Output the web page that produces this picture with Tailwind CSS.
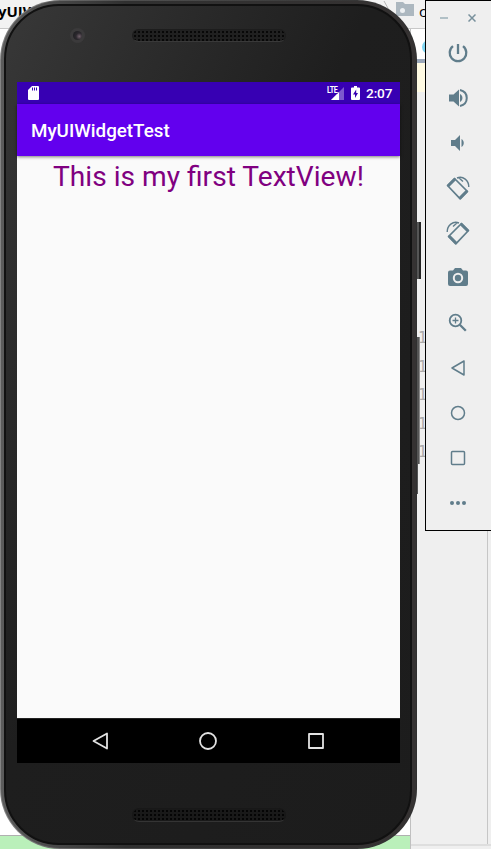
<!DOCTYPE html>
<html lang="en">
<head>
<meta charset="utf-8">
<title>Android Emulator</title>
<script src="https://cdn.jsdelivr.net/npm/@tailwindcss/browser@4"></script>
</head>
<body class="relative w-[491px] h-[849px] overflow-hidden bg-white font-['Roboto',sans-serif]">

<!-- IDE window behind the emulator -->
<div class="flex flex-col w-full h-full">
  <div class="flex h-[29px] shrink-0 justify-between border-b border-[#c8c8c8] bg-[#f2f2f2]">
    <span class="-ml-[2px] whitespace-nowrap font-['Open_Sans',sans-serif] text-[15px] font-bold leading-[22px] text-black">yUIW</span>
    <div class="flex w-[109px]">
      <svg class="h-[20px] w-[12px]" viewBox="0 0 12 20" fill="none" stroke="#b5b5b5"><path d="M2 1l5 9-5 9"/></svg>
      <svg class="ml-[2px] mt-[2px] h-[14px] w-[18px]" viewBox="0 0 18 14"><path fill="#adb8c0" d="M0 0h7l2 2h9v12H0z"/><circle cx="6.500" cy="8.500" r="2.500" fill="#eef1f3"/></svg>
      <span class="ml-[5px] font-['Open_Sans',sans-serif] text-[15px] leading-[22px] text-black">c</span>
    </div>
  </div>
  <div class="flex min-h-0 flex-1">
    <div class="flex w-[410px] flex-col justify-end"><div class="h-[14px] border-t border-[#b0b0b0] bg-[#baf0ba]"></div></div>
    <div class="flex w-[81px] flex-col border-l border-[#c0c0c0] bg-[#efefef]">
      <div class="flex h-[30px] shrink-0 items-center bg-white pl-[11px] pt-[6px]"><div class="size-[14px] rounded-full bg-[#7fd4f0]"></div></div>
      <div class="h-[4px] shrink-0 bg-[#9ba7b9]"></div>
      <div class="h-[29px] shrink-0 bg-[#fffae3]"></div>
      <div class="flex flex-1 justify-between border-b-2 border-[#dedede]">
        <div class="pl-[7px] pt-[232px] font-['DejaVu_Sans_Mono',monospace] text-[15px] leading-[28.600px] text-[#aaa]"><div>1</div><div>1</div><div>1</div><div>1</div><div>1</div></div>
        <div class="mr-[3px] w-px bg-[#c6c6c6]"></div>
      </div>
      <div class="h-[3px]"></div>
    </div>
  </div>
</div>

<!-- Hardware side buttons -->
<div class="absolute left-[415px] top-[222px] h-[57px] w-[6px] border-r-2 border-[#242424] bg-[#555]"></div>
<div class="absolute left-[415px] top-[337px] h-[127px] w-[5px] border-r border-[#888] bg-[#555]"></div>
<div class="absolute left-[414px] top-[464px] h-[30px] w-[4px] bg-[#555]"></div>

<!-- Phone -->
<div class="absolute left-0 top-0 h-[849px] w-[417px] rounded-[60px] bg-gradient-to-r from-[#858585] via-[#505050] via-30% to-[#303030] p-px">
  <div class="h-full w-full rounded-[59px] bg-gradient-to-r from-[#5c5c5c] via-[#303030] via-30% to-[#353232] pb-[3px] pl-[3px] pr-[4px] pt-[3px]">
    <div class="flex h-full w-full flex-col rounded-[55px] border-2 border-[#111] bg-gradient-to-br from-[#383838] via-[#1e1e1e] via-45% to-[#1c1c1c] pl-[11px]">
      <div class="flex h-[76px] shrink-0 items-start pl-[53px] pt-[22px]">
        <div class="flex size-[15px] items-center justify-center rounded-full bg-[#3b3a3b]"><div class="size-[9px] rounded-full bg-[radial-gradient(circle_at_70%_60%,#71616b_0,#2c282e_40%,#202023_75%)]"></div></div>
        <div class="ml-[47px] mt-px h-[13px] w-[154px] rounded-full border border-[#1d1d1d] border-b-[#393939] bg-[#202020] bg-[radial-gradient(circle,#080808_1px,transparent_1.300px)] bg-[length:4px_4px]"></div>
      </div>

      <!-- Screen -->
      <div class="flex h-[681px] w-[383px] shrink-0 flex-col bg-[#fafafa]">
        <div class="flex h-[22px] shrink-0 items-center bg-[#3700b3] pl-[11px] pr-[7px] text-white">
          <svg class="h-[14px] w-[11px]" viewBox="0 0 11 14"><path fill="#fff" d="M4 0h6q1 0 1 1v12q0 1-1 1H1q-1 0-1-1V4z"/><path stroke="#3700b3" d="M4.500 1.500v3M6.500 1.500v3M8.500 1.500v3"/></svg>
          <div class="relative ml-auto h-[15px] w-[17px]">
            <svg class="h-full w-full" viewBox="0 0 17 15"><path fill="#fff" fill-opacity=".35" d="M17 1v13H4z"/><path fill="#fff" d="M12 6v8H4z"/></svg>
            <span class="absolute left-0 top-0 origin-left scale-x-[.8] bg-[#3700b3] text-[9px] font-bold leading-[8px] tracking-[-0.500px]">LTE</span>
          </div>
          <svg class="ml-[7px] h-[14px] w-[9px]" viewBox="0 0 9 14"><path fill="#fff" d="M3 0h3v1.500h2q1 0 1 1V13q0 1-1 1H1q-1 0-1-1V2.500q0-1 1-1h2z"/><path fill="#3700b3" d="M5.200 3.500L2 8.500h2v3.500l3-5H5.200z"/></svg>
          <span class="ml-[6px] w-[27px] whitespace-nowrap text-[13.700px] font-medium leading-[22px] tracking-[-0.150px]">2:07</span>
        </div>
        <div class="flex h-[52px] shrink-0 items-center bg-[#6200ee] pl-[14px] pt-[3px] text-[18.800px] font-medium text-white shadow-[0_1px_3px_rgba(0,0,0,.5)]"><span class="whitespace-nowrap">MyUIWidgetTest</span></div>
        <div class="flex-1 whitespace-nowrap pt-[2px] text-center text-[28.150px] leading-[38px] text-[#800080]">This is my first TextView!</div>
        <div class="flex h-[45px] shrink-0 items-center justify-between border-t border-[#222] bg-black pb-px pl-[74px] pr-[75px]">
          <svg class="size-[18px]" viewBox="0 0 18 18" fill="none" stroke="#e2e2e2" stroke-width="1.800" stroke-linejoin="round"><path d="M16 1.500v15L2.500 9z"/></svg>
          <svg class="size-[18px]" viewBox="0 0 18 18" fill="none" stroke="#e2e2e2" stroke-width="1.800"><circle cx="9" cy="9" r="8"/></svg>
          <svg class="size-[18px]" viewBox="0 0 18 18" fill="none" stroke="#e2e2e2" stroke-width="1.800" stroke-linejoin="round"><path d="M2 2h14v14H2z"/></svg>
        </div>
      </div>

      <div class="pl-[115px] pt-[45px]"><div class="h-[14px] w-[154px] rounded-full border border-[#181818] border-b-[#343434] bg-[#191919] bg-[radial-gradient(circle,#050505_1px,transparent_1.300px)] bg-[length:4px_4px]"></div></div>
    </div>
  </div>
</div>

<!-- Emulator toolbar -->
<div class="absolute left-[425px] top-0 flex h-[531px] w-[67px] flex-col items-center border border-black bg-[#efefef] pr-px text-[#607d8b]">
  <div class="flex h-[29px] w-full shrink-0 items-center justify-between pl-[14px] pr-[14px] pt-[5px]">
    <svg class="h-[8px] w-[8px]" viewBox="0 0 8 8"><path stroke="#9db0b9" stroke-width="1.500" d="M0 4h8"/></svg>
    <svg class="h-[8px] w-[8px]" viewBox="0 0 8 8"><path stroke="#78909c" stroke-width="1.500" d="M.5.5l7 7m0-7l-7 7"/></svg>
  </div>
  <div class="grid grid-rows-[repeat(11,45px)] items-center">
    <svg class="size-6" viewBox="0 0 24 24" fill="none" stroke="currentColor" stroke-width="2.300"><path d="M12 3v10M7 5.200a8.300 8.300 0 1 0 10 0"/></svg>
    <svg class="size-6" viewBox="0 0 24 24" fill="currentColor"><path d="M3 8.500v7h4.500l5.500 5V3.500l-5.500 5zM14 8v8c3.300-1.500 3.300-6.500 0-8z"/><path fill="none" stroke="currentColor" stroke-width="2" d="M14 4c9 2 9 14 0 16"/></svg>
    <svg class="size-6" viewBox="0 0 24 24" fill="currentColor"><path d="M5 9v6h4l5 5V4L9 9zM15.500 8v8c3-1.500 3-6.500 0-8z"/></svg>
    <svg class="size-6 overflow-visible" viewBox="0 0 24 24" fill="none" stroke="currentColor" stroke-linejoin="round" stroke-linecap="round"><path stroke-width="1.700" d="M8.500 2.500L21.500 15.500l-7.300 7.300L1.500 9.500z"/><path stroke-width="2.800" d="M2.600 9.500l6-6M14.200 21.700l6.200-6.200"/><path stroke-width="1.400" stroke-linecap="butt" d="M11 2c6-2.500 12 2.500 11.800 9M12.500 1.500l4.500 4"/></svg>
    <svg class="size-6 overflow-visible -scale-x-100" viewBox="0 0 24 24" fill="none" stroke="currentColor" stroke-linejoin="round" stroke-linecap="round"><path stroke-width="1.700" d="M8.500 2.500L21.500 15.500l-7.300 7.300L1.500 9.500z"/><path stroke-width="2.800" d="M2.600 9.500l6-6M14.200 21.700l6.200-6.200"/><path stroke-width="1.400" stroke-linecap="butt" d="M11 2c6-2.500 12 2.500 11.800 9M12.500 1.500l4.500 4"/></svg>
    <svg class="size-6" viewBox="0 0 24 24"><path fill="currentColor" d="M9 2h6l2 2.500h3q2 0 2 2V18q0 2-2 2H4q-2 0-2-2V6.500q0-2 2-2h3z"/><circle cx="12" cy="12" r="4.200" fill="none" stroke="#efefef" stroke-width="2"/></svg>
    <svg class="size-6" viewBox="0 0 24 24" fill="none" stroke="currentColor"><circle cx="9.500" cy="9.500" r="5.800" stroke-width="1.800"/><path stroke-width="2.300" d="M13.800 13.800l6 6"/><path stroke-width="1.300" d="M6.500 9.500h6M9.500 6.500v6"/></svg>
    <svg class="size-6" viewBox="0 0 24 24" fill="none" stroke="currentColor" stroke-width="1.500" stroke-linejoin="round"><path d="M18 5v14L6 12z"/></svg>
    <svg class="size-6" viewBox="0 0 24 24" fill="none" stroke="currentColor" stroke-width="1.500"><circle cx="12" cy="12" r="6.500"/></svg>
    <svg class="size-6" viewBox="0 0 24 24" fill="none" stroke="currentColor" stroke-width="1.500"><rect x="5.500" y="5.500" width="13" height="13" rx="1"/></svg>
    <svg class="size-6" viewBox="0 0 24 24" fill="currentColor"><circle cx="6" cy="12" r="2"/><circle cx="12" cy="12" r="2"/><circle cx="18" cy="12" r="2"/></svg>
  </div>
</div>
</body>
</html>
